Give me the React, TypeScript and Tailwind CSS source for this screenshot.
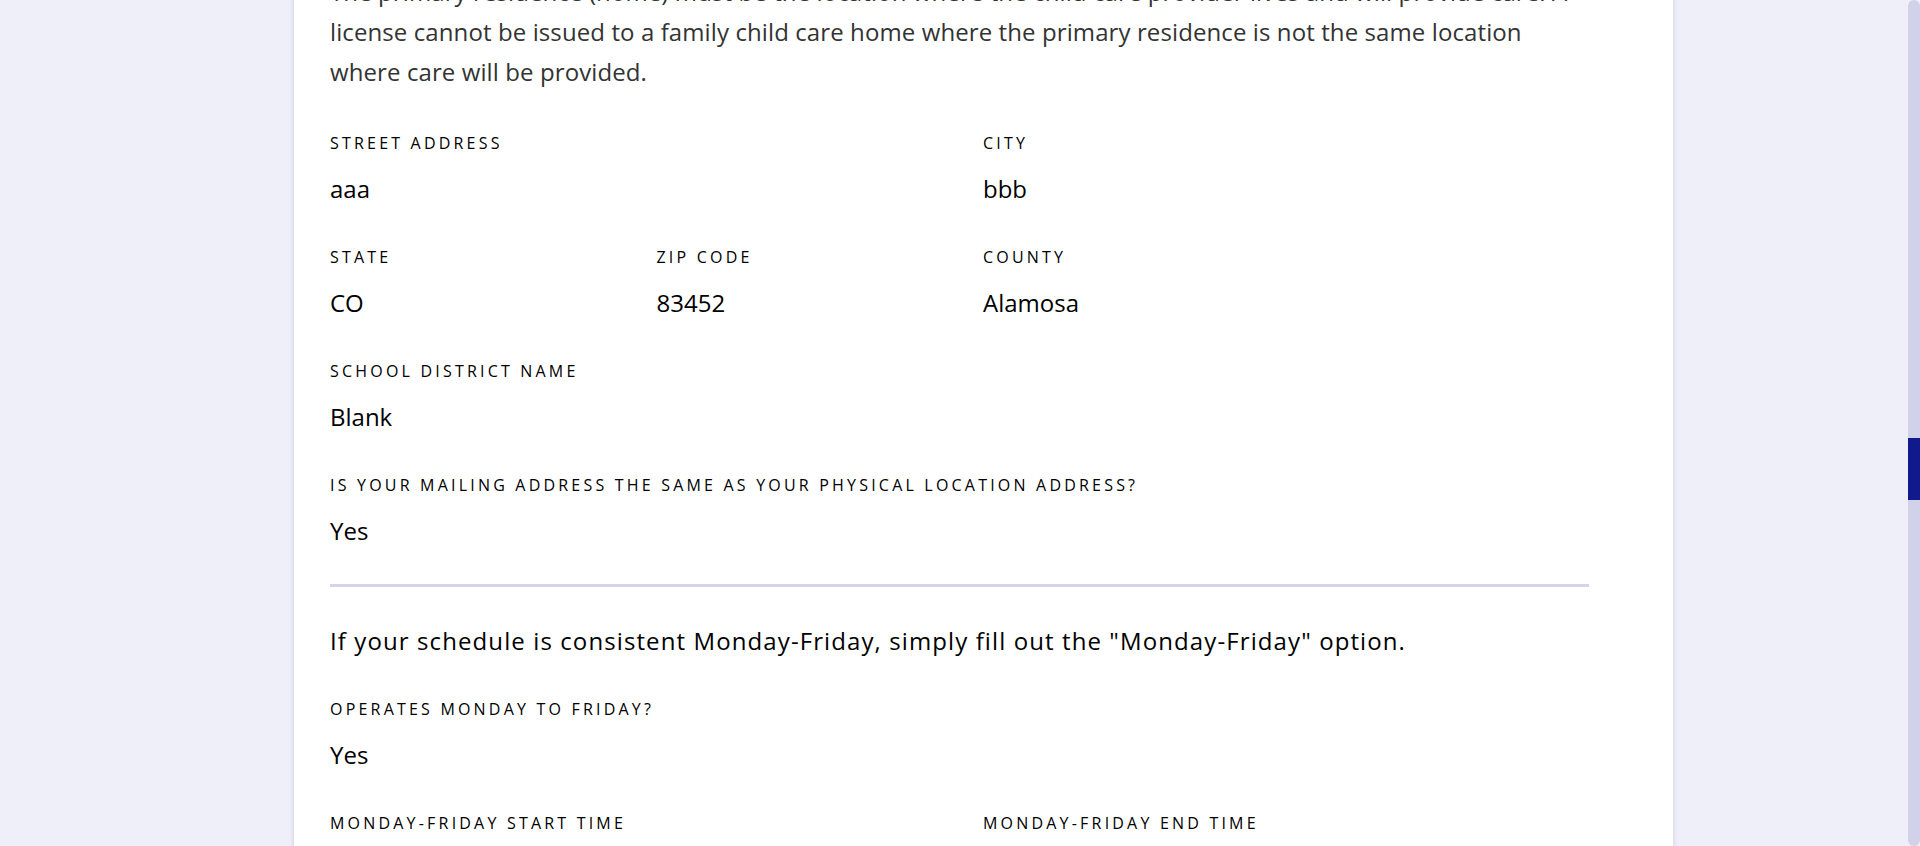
const font = { fontFamily: '"Open Sans", "Noto Sans", sans-serif' }

type FieldProps = {
	label: string
	value: string
	className?: string
}

function Field({ label, value, className }: FieldProps) {
	return (
		<div className={className}>
			<div className="h-5 text-[16px] leading-[20px] tracking-[3.2px] whitespace-nowrap text-black uppercase">
				{label}
			</div>
			<div className="mt-[21px] h-[30px] text-[24px] leading-[30px] text-black">
				{value}
			</div>
		</div>
	)
}

function Scrollbar() {
	return (
		<div className="flex h-full w-3 shrink-0 flex-col bg-[#eeeff9]">
			<div className="flex h-full flex-col rounded-full bg-[#d1d2e9]">
				<div className="mt-[438px] h-[62px] w-3 bg-[#111a8c]" />
			</div>
		</div>
	)
}

export default function App() {
	return (
		<div className="flex h-[846px] overflow-hidden bg-[#eeeff9]" style={font}>
			<main className="flex-1 pl-[294px]">
				<div className="-mt-[28px] h-[900px] w-[1379px] bg-white pl-9 shadow-[0_0_5px_rgba(40,40,90,0.18)]">
					<div className="w-[1259px]">
						<p className="text-[24px] leading-[40px] tracking-[0.1px] text-[#333]">
							The primary residence (home) must be the location where the child care provider lives and will provide care. A
							<br />
							license cannot be issued to a family child care home where the primary residence is not the same location
							<br />
							where care will be provided.
						</p>

						<div className="mt-[41px] grid grid-cols-4 gap-x-[47px] gap-y-[43px]">
							<Field label="Street Address" value="aaa" className="col-span-2" />
							<Field label="City" value="bbb" className="col-span-2" />
							<Field label="State" value="CO" />
							<Field label="Zip Code" value="83452" />
							<Field label="County" value="Alamosa" className="col-span-2" />
							<Field label="School District Name" value="Blank" className="col-span-4" />
							<Field
								label="Is your mailing address the same as your physical location address?"
								value="Yes"
								className="col-span-4"
							/>
						</div>

						<div className="mt-[38px] h-[3px] bg-[#d3d3ec]" />

						<p className="mt-[34px] text-[24px] leading-[40px] tracking-[1.1px] text-black">
							If your schedule is consistent Monday-Friday, simply fill out the "Monday-Friday" option.
						</p>

						<div className="mt-[38px] grid grid-cols-4 gap-x-[47px] gap-y-[43px]">
							<Field label="Operates Monday to Friday?" value="Yes" className="col-span-4" />
							<Field label="Monday-Friday Start Time" value="7:00 AM" className="col-span-2" />
							<Field label="Monday-Friday End Time" value="6:00 PM" className="col-span-2" />
						</div>
					</div>
				</div>
			</main>
			<Scrollbar />
		</div>
	)
}
